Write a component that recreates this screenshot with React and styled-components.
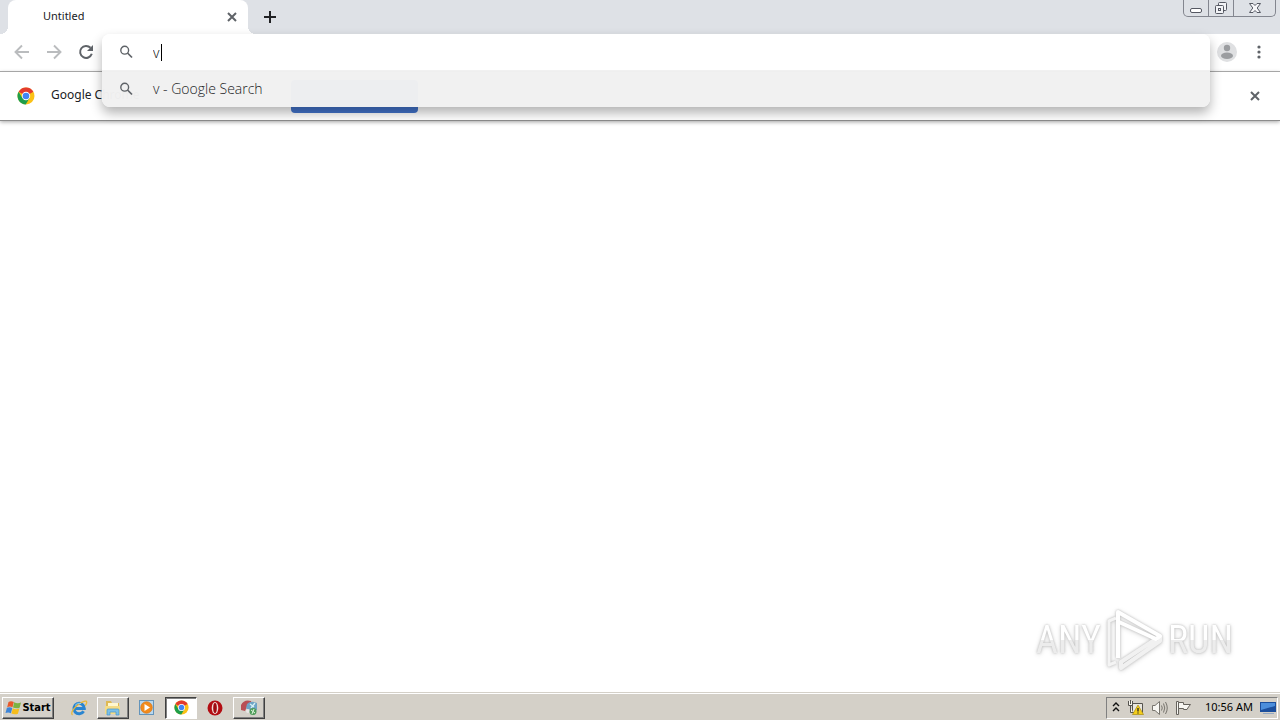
import styled, { createGlobalStyle } from "styled-components";

const GlobalStyle = createGlobalStyle`
*{
    box-sizing: border-box;
}
body{
    margin: 0;
    background: #fff;
    font-family: "DejaVu Sans Condensed", "DejaVu Sans", sans-serif;
    font-size: 11px;
    color: #202124;
}
button{
    display: flex;
    align-items: center;
    justify-content: center;
    padding: 0;
    border: 0;
    background: none;
    font: inherit;
    color: inherit;
}
svg{
    display: block;
    flex: none;
}
`

const Window = styled.div`
display: flex;
flex-direction: column;
min-height: 100vh;
`

const TabStrip = styled.header`
display: flex;
height: 34px;
padding-left: 8px;
background: #dee1e6;
`

const Tab = styled.div`
position: relative;
display: flex;
align-items: center;
justify-content: space-between;
width: 240px;
padding: 0 8px 0 35px;
border-radius: 8px 8px 0 0;
background: #fff;
font-family: "Noto Sans", sans-serif;
line-height: 14px;

span{
    padding-bottom: 2px;
}
&::before, &::after{
    content: "";
    position: absolute;
    bottom: 0;
    left: -8px;
    width: 8px;
    height: 8px;
    background: radial-gradient(circle at 0 0, transparent 8px, #fff 8px);
}
&::after{
    left: 100%;
    background: radial-gradient(circle at 100% 0, transparent 8px, #fff 8px);
}
`

const IconButton = styled.button`
width: ${(props) => props.$size}px;
height: ${(props) => props.$size}px;
color: ${(props) => props.$color || "#5f6368"};
`

const NewTab = styled(IconButton)`
margin: 3px 0 0 8px;
`

const WindowButtons = styled.div`
display: flex;
height: 17px;
margin: 0 4px 0 auto;
border: 1px solid #83868f;
border-top: 0;
border-radius: 0 0 5px 5px;

button{
    width: 25px;
}
button:first-child{
    width: 24px;
}
button + button{
    border-left: 1px solid #83868f;
}
button:last-child{
    width: 42px;
}
`

const Toolbar = styled.div`
position: relative;
display: flex;
align-items: center;
height: 38px;
padding: 0 9px 2px 10px;
border-bottom: 1px solid #a6a6a6;
`

const Nav = styled.nav`
display: flex;
gap: 8px;
flex: 1;
`

const Tools = styled.div`
display: flex;
align-items: center;
gap: 8px;
`

const Omnibox = styled.div`
position: absolute;
z-index: 1;
top: 0;
left: 102px;
right: 70px;
border-radius: 8px;
box-shadow: 0 6px 12px rgba(0, 0, 0, 0.3);
font-family: "Open Sans", sans-serif;
font-size: 14px;
font-weight: 300;
overflow: hidden;
`

const SearchRow = styled.label`
display: flex;
align-items: center;
gap: 19px;
height: 36px;
padding-left: 17px;
background: #fff;
color: #5f6368;

input{
    flex: 1;
    padding: 0;
    border: 0;
    outline: 0;
    background: none;
    font: inherit;
    color: #000;
}
`

const Field = styled.span`
display: flex;
align-items: center;
flex: 1;
`

const Caret = styled.i`
position: absolute;
left: 59px;
width: 1px;
height: 17px;
background: #000;
`

const Suggestion = styled.button`
&&{
    justify-content: flex-start;
    gap: 19px;
    width: 100%;
    height: 37px;
    padding-left: 17px;
    background: rgba(241, 241, 241, 0.98);
    color: #5f6368;
}
span{
    color: #202124;
}
`

const InfoBar = styled.section`
display: flex;
align-items: center;
height: 49px;
padding: 0 15px 0 17px;
border-bottom: 1px solid #8c8c8c;
box-shadow: 0 1px 4px rgba(0, 0, 0, 0.35);
font-family: "Noto Sans", sans-serif;
font-size: 12px;
line-height: 16px;

p{
    width: 240px;
    margin: 0 0 0 16px;
    padding-bottom: 2px;
    white-space: nowrap;
}
`

const DefaultButton = styled.button`
&&{
    width: 127px;
    height: 33px;
    border-radius: 4px;
    background: #4374cc;
    color: #fff;
}
`

const CloseInfo = styled(IconButton)`
margin-left: auto;
`

const Page = styled.main`
display: flex;
flex: 1;
align-items: flex-end;
justify-content: flex-end;
padding: 0 47px 20px 0;
`

const Watermark = styled.div`
display: flex;
align-items: center;
gap: 5px;
font-family: "Roboto Condensed", "Liberation Sans Narrow", "Liberation Sans", sans-serif;
font-size: 38px;
line-height: 64px;
filter: drop-shadow(0 0 1px #bbb) drop-shadow(0 1px 2px #ddd);

span{
    background: linear-gradient(#fff 50%, #ececec 50%);
    background-clip: text;
    color: transparent;
}
`

const Taskbar = styled.footer`
display: flex;
align-items: center;
height: 28px;
padding: 2px 2px 0;
border-top: 1px solid #d4d0c8;
box-shadow: inset 0 1px #fff;
background: #d4d0c8;
color: #000;
`

const TaskButton = styled.button`
&&{
    width: ${(props) => props.$width || 32}px;
    height: 22px;
    border: 1px solid;
    border-color: ${(props) => props.$pressed ? "#404040 #fff #fff #404040" : "#fff #404040 #404040 #fff"};
    background: ${(props) => props.$pressed ? "#fff" : "#d4d0c8"};
    box-shadow: ${(props) => props.$pressed ? "inset 1px 1px #808080" : "inset -1px -1px #808080"};
}
`

const StartButton = styled(TaskButton)`
&&{
    font-size: 11px;
    font-weight: 700;
    line-height: 14px;
}
`

const QuickButton = styled.button`
width: 32px;
height: 22px;
`

const Launcher = styled.div`
display: flex;
gap: 2px;
margin-left: 9px;
`

const Tray = styled.div`
display: flex;
align-items: center;
gap: 7px;
height: 22px;
margin-left: auto;
padding: 0 1px 0 5px;
border: 1px solid;
border-color: #808080 #fff #fff #808080;
font-family: "Noto Sans", sans-serif;
line-height: 14px;

time{
    margin-left: 6px;
    padding-bottom: 2px;
}
`

function Cross({ size = 10, width = 2 }) {
    return (
        <svg width={size} height={size} viewBox="0 0 10 10" stroke="currentColor" strokeWidth={width}>
            <path d="M1 1L9 9M9 1L1 9" />
        </svg>
    )
}

function SearchIcon() {
    return (
        <svg width="15" height="16" viewBox="0 0 15 16" fill="none" stroke="currentColor" strokeWidth="1.4">
            <circle cx="5.7" cy="6.2" r="3.9" />
            <path d="M8.500 9L13 13.500" strokeWidth="1.700" />
        </svg>
    )
}

function ArrowIcon({ forward }) {
    return (
        <svg width="16" height="16" viewBox="0 0 16 16" fill="none" stroke="currentColor" strokeWidth="1.900">
            <path d={forward ? "M1 8H14M8 1.500L14.500 8L8 14.500" : "M15 8H2M8 1.500L1.500 8L8 14.500"} />
        </svg>
    )
}

function ReloadIcon() {
    return (
        <svg width="16" height="16" viewBox="0 0 16 16">
            <path d="M12.500 3.800A6 6 0 1 0 13.800 9.800" fill="none" stroke="currentColor" strokeWidth="2" />
            <path d="M15 1V7H9Z" fill="currentColor" />
        </svg>
    )
}

function ChromeIcon({ size }) {
    return (
        <svg width={size} height={size} viewBox="0 0 18 18">
            <circle cx="9" cy="9" r="8.500" fill="#fbc116" />
            <path d="M9 9L1.600 4.800A8.500 8.500 0 0 1 16.400 4.800Z" fill="#e33b2e" />
            <path d="M1.600 4.800A8.500 8.500 0 0 0 8.700 17.500L12.600 11L9 9L5.400 11Z" fill="#1e9e4a" />
            <circle cx="9" cy="9" r="4.200" fill="#fff" />
            <circle cx="9" cy="9" r="3.300" fill="#4285f4" />
        </svg>
    )
}

function AvatarIcon() {
    return (
        <svg width="20" height="20" viewBox="0 0 20 20">
            <circle cx="10" cy="10" r="10" fill="#dfe0e2" />
            <circle cx="10" cy="6" r="3.200" fill="#9b9da0" />
            <ellipse cx="10" cy="13.800" rx="6" ry="3.200" fill="#9b9da0" />
        </svg>
    )
}

function WindowsIcon() {
    return (
        <svg width="17" height="16" viewBox="0 0 17 16">
            <path d="M3.500 2Q6 .5 8.800 2L7.500 7.300Q5 5.800 2.200 7.200Z" fill="#e8592a" />
            <path d="M9.200 2.300Q12.500 4 16 2.500L14.600 7.800Q11.500 9 8 7.500Z" fill="#7cb342" />
            <path d="M1.900 7.800Q4.600 6.600 7.300 8L5.900 13.200Q3.300 11.700 .5 13Z" fill="#3d85d8" />
            <path d="M7.800 8.200Q11 10 14.400 8.400L12.900 13.700Q9.800 15 6.400 13.500Z" fill="#f6bd1c" />
        </svg>
    )
}

function ExplorerIcon() {
    return (
        <svg width="18" height="18" viewBox="0 0 18 18" fill="none">
            <path d="M13.600 12.200A5.200 5.200 0 1 1 14.300 9.500H5" stroke="#2a85d0" strokeWidth="3" />
            <path d="M2.500 16C-1 13.500 8 4 14 2.300C17.800 1.200 17 4.500 15.300 6.700" stroke="#e9b83a" strokeWidth="1.300" />
            <path d="M5 6.500A5 5 0 0 1 11 4.500" stroke="#8fd0f5" />
        </svg>
    )
}

function FolderIcon() {
    return (
        <svg width="18" height="18" viewBox="0 0 18 18">
            <path d="M2 2H7L8 4H15V15H2Z" fill="#dfb953" />
            <path d="M4 4H14V9H4Z" fill="#fff7cf" />
            <path d="M1 7H16V15H1Z" fill="#f5dc86" />
            <path d="M3 16V11Q3 10 4 10H14Q15 10 15 11V16H12V13H6V16Z" fill="#7cc0e8" stroke="#4797c8" strokeWidth=".7" />
        </svg>
    )
}

function PlayerIcon() {
    return (
        <svg width="18" height="18" viewBox="0 0 18 18">
            <rect x="1.500" y="1.500" width="14" height="14" fill="#b9d8ee" stroke="#6394bb" />
            <circle cx="8.500" cy="8.500" r="5.800" fill="#f28b1d" stroke="#d36b0c" strokeWidth=".6" />
            <path d="M6.500 5L12 8.500L6.500 12Z" fill="#fff" />
        </svg>
    )
}

function OperaIcon() {
    return (
        <svg width="18" height="18" viewBox="0 0 18 18">
            <circle cx="9" cy="9" r="7.500" fill="#b30d13" />
            <ellipse cx="9" cy="9" rx="3.300" ry="6" fill="#f0dcd8" />
            <ellipse cx="9" cy="9" rx="1.800" ry="5" fill="#a00a10" />
        </svg>
    )
}

function ProcessIcon() {
    return (
        <svg width="18" height="18" viewBox="0 0 18 18">
            <path d="M1 6Q4 0 11 2L12 6L7 8L5 12L1 11Z" fill="#b94f55" />
            <path d="M7 5Q11 1 17 4V11L10 13L6 9Z" fill="#6ea3c5" />
            <path d="M10 5L14 8M15 4L11 9" stroke="#d5f0f4" strokeWidth="1.300" />
            <circle cx="8" cy="12" r="2" fill="#e8e8e8" />
            <circle cx="13" cy="12.500" r="3.500" fill="#4f9d59" />
            <path d="M11 11L15 14M14 10L12 15" stroke="#dff5dc" />
        </svg>
    )
}

function NetworkIcon() {
    return (
        <svg width="17" height="17" viewBox="0 0 17 17">
            <path d="M5.500 4.500H15.500V13.500H5.500Z" fill="#e8e6e0" stroke="#55534e" />
            <path d="M1.500 2V6.500H5.500V2M3.500 1V5M3.500 7V13.500H6" fill="#f5f3ed" stroke="#55534e" />
            <path d="M11 6L16.500 15.500H5.500Z" fill="#f5cf1b" stroke="#a98b10" strokeWidth=".7" />
            <path d="M11 9V12.500M11 13.500V14.500" stroke="#222" strokeWidth="1.300" />
        </svg>
    )
}

function SpeakerIcon() {
    return (
        <svg width="17" height="16" viewBox="0 0 17 16" fill="none" stroke="#77746d">
            <path d="M1.500 5.500H4L8.500 1.500V14.500L4 10.500H1.500Z" fill="#f7f6f2" />
            <path d="M10.500 5.500Q12 8 10.500 10.500M12.500 3.500Q15 8 12.500 12.500M14.500 2Q18 8 14.500 14" />
        </svg>
    )
}

function FlagIcon() {
    return (
        <svg width="17" height="16" viewBox="0 0 17 16" fill="#f7f6f2" stroke="#66635d">
            <path d="M1.500 1.500H3.500V14.500H1.500Z" />
            <path d="M3.500 2.500H8.500V4.500H15.500L13.500 7L12 9.500H8.500V8.500H3.500Z" />
        </svg>
    )
}

function DesktopIcon() {
    return (
        <svg width="16" height="16" viewBox="0 0 16 16">
            <path d="M0 2H16V12H0Z" fill="#1c4f9c" />
            <path d="M1 3H15V6L1 10Z" fill="#4c8edb" />
            <path d="M3 13H14V14H3Z" fill="#94a9c3" />
        </svg>
    )
}

function PlayMark() {
    return (
        <svg width="57" height="64" viewBox="0 0 57 64" fill="none" stroke="#fff" strokeWidth="4" strokeLinejoin="round">
            <path d="M10 10L3 13V57L10 54" stroke="#f4f4f4" strokeWidth="3" />
            <path d="M54 28V33L15 60V54L50 31" stroke="#f1f1f1" />
            <path d="M12 50V4L54 28L50 31L13 14" />
        </svg>
    )
}

const App = () => {
    return (
        <>
            <GlobalStyle />
            <Window>
                <TabStrip>
                    <Tab>
                        <span>Untitled</span>
                        <IconButton $size={16} aria-label="Close tab"><Cross /></IconButton>
                    </Tab>
                    <NewTab $size={28} $color="#202124" aria-label="New tab">
                        <svg width="12" height="12" viewBox="0 0 12 12" stroke="currentColor" strokeWidth="2">
                            <path d="M6 0V12M0 6H12" />
                        </svg>
                    </NewTab>
                    <WindowButtons>
                        <button aria-label="Minimize">
                            <svg width="14" height="14" viewBox="0 0 14 14">
                                <rect x="1.500" y="7.500" width="11" height="4" rx="1.500" fill="#fff" stroke="#555862" />
                            </svg>
                        </button>
                        <button aria-label="Restore">
                            <svg width="14" height="14" viewBox="0 0 14 14" fill="#f2f3f6" stroke="#555862">
                                <rect x="4.500" y="1.500" width="8" height="8" rx="1" />
                                <rect x="1.500" y="4.500" width="8" height="8" rx="1" />
                                <rect x="4.500" y="7.500" width="2" height="2" />
                            </svg>
                        </button>
                        <button aria-label="Close">
                            <svg width="12" height="12" viewBox="0 0 12 12">
                                <path d="M.5 1.500H4L6 3.500L8 1.500H11.500L8.200 6L11.500 10.500H8L6 8.500L4 10.500H.5L3.800 6Z" fill="#f7f7fa" stroke="#555862" />
                            </svg>
                        </button>
                    </WindowButtons>
                </TabStrip>
                <Toolbar>
                    <Nav>
                        <IconButton $size={24} $color="#babcbe" aria-label="Back"><ArrowIcon /></IconButton>
                        <IconButton $size={24} $color="#babcbe" aria-label="Forward"><ArrowIcon forward /></IconButton>
                        <IconButton $size={24} aria-label="Reload"><ReloadIcon /></IconButton>
                    </Nav>
                    <Omnibox>
                        <SearchRow>
                            <SearchIcon />
                            <Field>
                                <input aria-label="Address and search bar" defaultValue="v" />
                                <Caret />
                            </Field>
                        </SearchRow>
                        <Suggestion>
                            <SearchIcon />
                            <span>v - Google Search</span>
                        </Suggestion>
                    </Omnibox>
                    <Tools>
                        <IconButton $size={24} aria-label="Profile"><AvatarIcon /></IconButton>
                        <IconButton $size={24} aria-label="Menu">
                            <svg width="4" height="16" viewBox="0 0 4 16" fill="currentColor">
                                <circle cx="2" cy="3" r="1.600" />
                                <circle cx="2" cy="8" r="1.600" />
                                <circle cx="2" cy="13" r="1.600" />
                            </svg>
                        </IconButton>
                    </Tools>
                </Toolbar>
                <InfoBar>
                    <ChromeIcon size={18} />
                    <p>Google Chrome</p>
                    <DefaultButton aria-label="Set as default" />
                    <CloseInfo $size={20} aria-label="Dismiss"><Cross /></CloseInfo>
                </InfoBar>
                <Page>
                    <Watermark>
                        <span>ANY</span>
                        <PlayMark />
                        <span>RUN</span>
                    </Watermark>
                </Page>
                <Taskbar>
                    <StartButton $width={52}><WindowsIcon />Start</StartButton>
                    <Launcher>
                        <QuickButton aria-label="Internet Explorer"><ExplorerIcon /></QuickButton>
                        <TaskButton aria-label="Windows Explorer"><FolderIcon /></TaskButton>
                        <QuickButton aria-label="Media Player"><PlayerIcon /></QuickButton>
                        <TaskButton $pressed aria-label="Google Chrome"><ChromeIcon size={15} /></TaskButton>
                        <QuickButton aria-label="Opera"><OperaIcon /></QuickButton>
                        <TaskButton aria-label="Process monitor"><ProcessIcon /></TaskButton>
                    </Launcher>
                    <Tray>
                        <svg width="8" height="12" viewBox="0 0 8 12" fill="none" stroke="#111" strokeWidth="1.400">
                            <path d="M1 4L4 1L7 4M1 9L4 6L7 9" />
                        </svg>
                        <NetworkIcon />
                        <SpeakerIcon />
                        <FlagIcon />
                        <time>10:56 AM</time>
                        <DesktopIcon />
                    </Tray>
                </Taskbar>
            </Window>
        </>
    )
}

export default App;
